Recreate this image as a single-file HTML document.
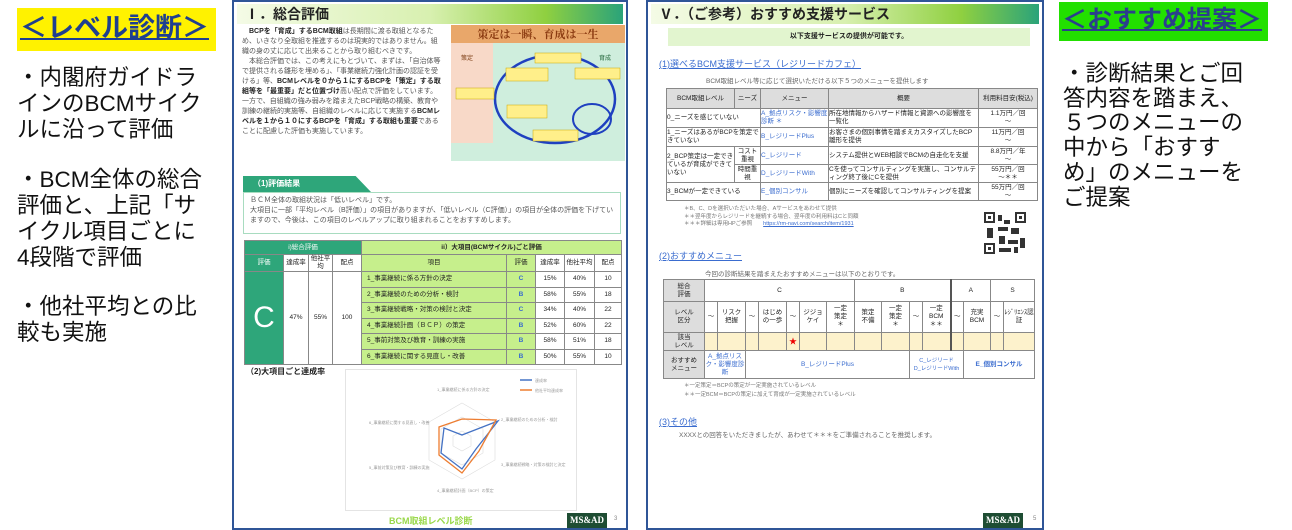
<!DOCTYPE html>
<html><head><meta charset="utf-8">
<style>
*{margin:0;padding:0;box-sizing:border-box}
body{width:1292px;height:530px;background:#fff;position:relative;overflow:hidden;font-family:"Liberation Sans","Noto Sans CJK JP",sans-serif;color:#222}
.a{position:absolute}
.lbl{font-weight:bold;color:#1f3f8f;text-decoration:underline;text-decoration-thickness:2px;white-space:nowrap}
.big{font-size:22.5px;line-height:26px;color:#111;white-space:nowrap}
.doc{position:absolute;border:2px solid #2f5597;background:#fff;top:0;height:530px}
.hdr{position:absolute;left:3px;right:3px;top:2px;height:20px;background:linear-gradient(90deg,#f4fbe6 0%,#d8f0b0 50%,#8fd040 80%,#2aa37a 100%);font-weight:bold;font-size:14px;padding-left:8px;line-height:20px}
.t7{font-size:7px;line-height:10px}
table{border-collapse:collapse;position:absolute}
td{border:1px solid #888;text-align:center;vertical-align:middle;font-size:6.5px;line-height:8px;padding:0}
.blue{color:#3a6ccf}
.logo{position:absolute;background:#1e4d33;color:#fff;font-family:"Liberation Serif",serif;font-weight:bold;font-size:9px;line-height:14px;text-align:center;width:40px;height:15px}
</style></head><body>

<!-- left -->
<div class="a" style="left:17px;top:8px;width:199px;height:43px;background:#fff200"></div>
<div class="a lbl" style="left:20px;top:11px;font-size:27px;line-height:34px">＜レベル診断＞</div>
<div class="a big" style="left:17px;top:65px">・内閣府ガイドラ<br>インのBCMサイク<br>ルに沿って評価</div>
<div class="a big" style="left:17px;top:167px">・BCM全体の総合<br>評価と、上記「サ<br>イクル項目ごとに<br>4段階で評価</div>
<div class="a big" style="left:17px;top:294px">・他社平均との比<br>較も実施</div>

<!-- right -->
<div class="a" style="left:1059px;top:2px;width:209px;height:39px;background:#22e000"></div>
<div class="a lbl" style="left:1062px;top:4px;font-size:25px;line-height:32px;color:#2b3f8c">＜おすすめ提案＞</div>
<div class="a big" style="left:1063px;top:62px;line-height:24.7px">・診断結果とご回<br>答内容を踏まえ、<br>５つのメニューの<br>中から「おすす<br>め」のメニューを<br>ご提案</div>

<!-- doc 1 -->
<div class="doc" style="left:232px;width:396px">
 <div class="hdr">Ⅰ．総合評価</div>
 <div class="a t7" style="left:8px;top:25px;width:202px;color:#555"><b style="color:#222">　BCPを「育成」するBCM取組</b>は長期間に渡る取組となるため、いきなり全取組を推進するのは現実的ではありません。組織の身の丈に応じて出来ることから取り組むべきです。<br>　本総合評価では、この考えにもとづいて、まずは、「自治体等で提供される雛形を埋める」、「事業継続力強化計画の認証を受ける」等、<b style="color:#222">BCMレベルを０から１にするBCPを「策定」する取組等を「最重要」だと位置づけ</b>高い配点で評価をしています。一方で、自組織の強み弱みを踏まえたBCP戦略の構築、教育や訓練の継続的実施等、自組織のレベルに応じて実施する<b style="color:#222">BCMレベルを１から１０にするBCPを「育成」する取組も重要</b>であることに配慮した評価も実施しています。</div>
 <div class="a" style="left:217px;top:23px;width:174px;height:136px;background:#cfeedd">
  <div class="a" style="left:0;top:0;width:174px;height:18px;background:#e9a76a;color:#8a3a10;font-weight:bold;font-size:11px;line-height:18px;text-align:center;font-family:'Noto Serif CJK SC',serif">策定は一瞬、育成は一生</div>
  <div class="a" style="left:0;top:18px;width:42px;height:100px;background:#f8d9c8"></div>
  <div class="a" style="left:10px;top:28px;font-size:6px;color:#7a3a10">策定</div>
  <div class="a" style="left:148px;top:28px;font-size:6px;color:#22663a">育成</div>
  <svg class="a" style="left:0;top:18px" width="174" height="118"><ellipse cx="104" cy="56" rx="60" ry="44" fill="none" stroke="#1f40c0" stroke-width="2.5"/><ellipse cx="141" cy="76" rx="19" ry="15" fill="none" stroke="#1f40c0" stroke-width="2"/>
  <g fill="#ffef8a" stroke="#c9a800" stroke-width=".5"><rect x="84" y="10" width="46" height="10"/><rect x="124" y="25" width="45" height="11"/><rect x="55" y="25" width="42" height="13"/><rect x="5" y="45" width="38" height="11"/><rect x="56" y="62" width="40" height="13"/><rect x="82" y="87" width="45" height="11"/></g></svg>
 </div>
 <div class="a" style="left:9px;top:174px;width:128px;height:16px;background:#2ea67a;clip-path:polygon(0 0,88% 0,100% 100%,0 100%);color:#fff;font-weight:bold;font-size:8px;line-height:16px;padding-left:10px">（1)評価結果</div>
 <div class="a t7" style="left:9px;top:190px;width:378px;height:42px;border:1px solid #a8dcc0;padding:3px 6px;color:#555;font-size:7px">ＢＣＭ全体の取組状況は「低いレベル」です。<br>大項目に一部「平均レベル（B評価）」の項目がありますが、「低いレベル（C評価）」の項目が全体の評価を下げていますので、今後は、この項目のレベルアップに取り組まれることをおすすめします。</div>
 <table style="left:10px;top:238px;width:378px">
  <tr style="height:14px"><td colspan="4" style="background:#2ea67a;color:#fff">i)総合評価</td><td colspan="5" style="background:#c6ef8c;font-weight:bold">ii）大項目(BCMサイクル)ごと評価</td></tr>
  <tr style="height:13px"><td style="background:#2ea67a;color:#fff;width:39px">評価</td><td style="width:25px">達成率</td><td style="width:24px">他社平均</td><td style="width:29px">配点</td><td style="background:#c6ef8c;width:145px">項目</td><td style="background:#c6ef8c;width:29px">評価</td><td style="width:29px">達成率</td><td style="width:30px">他社平均</td><td>配点</td></tr>
  <tr style="height:15.5px"><td rowspan="6" style="background:#2ea67a;color:#fff;font-size:30px;line-height:30px">C</td><td rowspan="6">47%</td><td rowspan="6">55%</td><td rowspan="6">100</td><td style="background:#c6ef8c;text-align:left;padding-left:5px">1_事業継続に係る方針の決定</td><td style="background:#c6ef8c" class="blue"><b>C</b></td><td>15%</td><td>40%</td><td>10</td></tr>
  <tr style="height:15.5px"><td style="background:#c6ef8c;text-align:left;padding-left:5px">2_事業継続のための分析・検討</td><td style="background:#c6ef8c" class="blue"><b>B</b></td><td>58%</td><td>55%</td><td>18</td></tr>
  <tr style="height:15.5px"><td style="background:#c6ef8c;text-align:left;padding-left:5px">3_事業継続戦略・対策の検討と決定</td><td style="background:#c6ef8c" class="blue"><b>C</b></td><td>34%</td><td>40%</td><td>22</td></tr>
  <tr style="height:15.5px"><td style="background:#c6ef8c;text-align:left;padding-left:5px">4_事業継続計画（ＢＣＰ）の策定</td><td style="background:#c6ef8c" class="blue"><b>B</b></td><td>52%</td><td>60%</td><td>22</td></tr>
  <tr style="height:15.5px"><td style="background:#c6ef8c;text-align:left;padding-left:5px">5_事前対策及び教育・訓練の実施</td><td style="background:#c6ef8c" class="blue"><b>B</b></td><td>58%</td><td>51%</td><td>18</td></tr>
  <tr style="height:15.5px"><td style="background:#c6ef8c;text-align:left;padding-left:5px">6_事業継続に関する見直し・改善</td><td style="background:#c6ef8c" class="blue"><b>B</b></td><td>50%</td><td>55%</td><td>10</td></tr>
 </table>
 <div class="a" style="left:12px;top:364px;font-size:8px;font-weight:bold">（2)大項目ごと達成率</div>
 <div class="a" style="left:111px;top:367px;width:232px;height:142px;border:1px solid #e4e4e4"></div>
 <svg class="a" style="left:111px;top:367px" width="232" height="142">
  <g fill="none" stroke="#ddd" stroke-width=".6"><polygon points="117,34 150,53 150,91 117,110 84,91 84,53"/><polygon points="117,48 138,60 138,84 117,96 96,84 96,60"/><polygon points="117,62 126,67 126,77 117,82 108,77 108,67"/></g>
  <polygon points="117,66 153,52 131,80 117,100 96,84 99,59" fill="none" stroke="#4472c4" stroke-width="1.3"/>
  <polygon points="117,50 151,51 134,82 117,104 94,86 94,58" fill="none" stroke="#ed7d31" stroke-width="1.3"/>
  <line x1="175" y1="11" x2="187" y2="11" stroke="#4472c4" stroke-width="1.5"/><line x1="175" y1="21" x2="187" y2="21" stroke="#ed7d31" stroke-width="1.5"/>
  <g font-size="4" fill="#999"><text x="190" y="13">達成率</text><text x="190" y="23">他社平均達成率</text><text x="92" y="22">1_事業継続に係る方針の決定</text><text x="156" y="52">2_事業継続のための分析・検討</text><text x="156" y="97">3_事業継続戦略・対策の検討と決定</text><text x="92" y="123">4_事業継続計画（BCP）の策定</text><text x="24" y="100">5_事前対策及び教育・訓練の実施</text><text x="24" y="55">6_事業継続に関する見直し・改善</text></g>
 </svg>
 <div class="a" style="left:155px;top:512px;font-size:9px;color:#9ad84a;font-weight:bold">BCM取組レベル診断</div>
 <div class="logo" style="left:333px;top:511px">MS&amp;AD</div>
 <div class="a" style="left:380px;top:514px;font-size:6px;color:#888">3</div>
</div>

<!-- doc 2 -->
<div class="doc" style="left:646px;width:398px">
 <div class="hdr">Ⅴ．（ご参考）おすすめ支援サービス</div>
 <div class="a" style="left:20px;top:26px;width:362px;height:18px;background:#e2f5cf;font-size:7px;font-weight:bold;text-align:center;line-height:18px">以下支援サービスの提供が可能です。</div>
 <div class="a" style="left:11px;top:55px;font-size:9px;color:#3a6ccf;text-decoration:underline">(1)選べるBCM支援サービス（レジリードカフェ）</div>
 <div class="a" style="left:58px;top:73px;font-size:6.5px;color:#666">BCM取組レベル等に応じて選択いただける以下５つのメニューを提供します</div>
 <table style="left:18px;top:86px;width:372px;border:1.5px solid #777">
  <tr style="height:20px;background:#ddd"><td style="width:68px">BCM取組レベル</td><td style="width:26px">ニーズ</td><td style="width:68px">メニュー</td><td style="width:150px">概要</td><td>利用料目安(税込)</td></tr>
  <tr style="height:19px"><td colspan="2" style="text-align:left">0_ニーズを感じていない</td><td class="blue" style="text-align:left">A_拠点リスク・影響度診断 ＊</td><td style="text-align:left">所在地情報からハザード情報と資源への影響度を一覧化</td><td>1.1万円／回<br>～</td></tr>
  <tr style="height:19px"><td colspan="2" style="text-align:left">1_ニーズはあるがBCPを策定できていない</td><td class="blue" style="text-align:left">B_レジリードPlus</td><td style="text-align:left">お客さまの個別事情を踏まえカスタイズしたBCP雛形を提供</td><td>11万円／回<br>～</td></tr>
  <tr style="height:18px"><td rowspan="2" style="text-align:left">2_BCP策定は一定できているが育成ができていない</td><td>コスト重視</td><td class="blue" style="text-align:left">C_レジリード</td><td style="text-align:left">システム提供とWEB相談でBCMの自走化を支援</td><td>8.8万円／年<br>～</td></tr>
  <tr style="height:18px"><td>時間重視</td><td class="blue" style="text-align:left">D_レジリードWith</td><td style="text-align:left">Cを使ってコンサルティングを実施し、コンサルティング終了後にCを提供</td><td>55万円／回<br>～＊＊</td></tr>
  <tr style="height:18px"><td colspan="2" style="text-align:left">3_BCMが一定できている</td><td class="blue" style="text-align:left">E_個別コンサル</td><td style="text-align:left">個別にニーズを確認してコンサルティングを提案</td><td>55万円／回<br>～</td></tr>
 </table>
 <div class="a" style="left:36px;top:204px;font-size:5.5px;line-height:7.5px;color:#777">＊B、C、Dを選択いただいた場合、Aサービスをあわせて提供<br>＊＊翌年度からレジリードを継続する場合、翌年度の利用料はCと同額<br>＊＊＊詳細は専用HPご参照　　<span style="color:#3a6ccf;text-decoration:underline">https://rm-navi.com/search/item/1931</span></div>
 <svg class="a" style="left:336px;top:210px" width="42" height="42"><rect width="42" height="42" fill="#fff"/><g fill="#333"><rect x="0" y="0" width="11" height="11"/><rect x="31" y="0" width="11" height="11"/><rect x="0" y="31" width="11" height="11"/><rect x="14" y="3" width="4" height="6"/><rect x="20" y="8" width="6" height="4"/><rect x="14" y="15" width="10" height="4"/><rect x="3" y="16" width="6" height="10"/><rect x="27" y="16" width="8" height="6"/><rect x="15" y="24" width="6" height="8"/><rect x="24" y="28" width="10" height="4"/><rect x="36" y="26" width="5" height="10"/><rect x="15" y="36" width="12" height="4"/><rect x="30" y="35" width="4" height="6"/></g><g fill="#fff"><rect x="2" y="2" width="7" height="7"/><rect x="33" y="2" width="7" height="7"/><rect x="2" y="33" width="7" height="7"/></g><g fill="#333"><rect x="4" y="4" width="3" height="3"/><rect x="35" y="4" width="3" height="3"/><rect x="4" y="35" width="3" height="3"/></g></svg>
 <div class="a" style="left:11px;top:247px;font-size:9px;color:#3a6ccf;text-decoration:underline">(2)おすすめメニュー</div>
 <div class="a" style="left:57px;top:266px;font-size:6.5px;color:#666">今回の診断結果を踏まえたおすすめメニューは以下のとおりです。</div>
 <table style="left:15px;top:277px;width:372px;border:1.5px solid #777">
  <tr style="height:22px"><td style="background:#ddd;width:41px">総合<br>評価</td><td colspan="7">C</td><td colspan="4">B</td><td colspan="2" style="border-left:2px solid #555">A</td><td colspan="2">S</td></tr>
  <tr style="height:31px"><td style="background:#ddd">レベル<br>区分</td><td style="width:13px">～</td><td style="width:28px">リスク<br>把握</td><td style="width:13px">～</td><td style="width:28px">はじめ<br>の一歩</td><td style="width:13px">～</td><td style="width:27px">ジジョ<br>ケイ</td><td style="width:28px">一定<br>策定<br>＊</td><td style="width:27px">策定<br>不備</td><td style="width:28px">一定<br>策定<br>＊</td><td style="width:13px">～</td><td style="width:28px">一定<br>BCM<br>＊＊</td><td style="width:13px;border-left:2px solid #555">～</td><td style="width:27px">充実<br>BCM</td><td style="width:13px">～</td><td>ﾚｼﾞﾘｴﾝｽ認証</td></tr>
  <tr style="height:18px;background:#fdf2cc"><td style="background:#ddd">該当<br>レベル</td><td></td><td></td><td></td><td></td><td style="color:#e00;font-size:8px">★</td><td></td><td></td><td></td><td></td><td></td><td></td><td style="border-left:2px solid #555"></td><td></td><td></td><td></td></tr>
  <tr style="height:28px"><td style="background:#ddd">おすすめ<br>メニュー</td><td colspan="2" class="blue">A_拠点リスク・影響度診断</td><td colspan="7" class="blue">B_レジリードPlus</td><td colspan="3" class="blue" style="font-size:5.5px">C_レジリード<br>D_レジリードWith</td><td colspan="3" class="blue"><b>E_個別コンサル</b></td></tr>
 </table>
 <div class="a" style="left:36px;top:380px;font-size:5.5px;line-height:9px;color:#777">＊一定策定＝BCPの策定が一定実施されているレベル<br>＊＊一定BCM＝BCPの策定に加えて育成が一定実施されているレベル</div>
 <div class="a" style="left:11px;top:413px;font-size:9px;color:#3a6ccf;text-decoration:underline">(3)その他</div>
 <div class="a" style="left:31px;top:427px;font-size:6.5px;color:#666">XXXXとの回答をいただきましたが、あわせて＊＊＊をご準備されることを推奨します。</div>
 <div class="logo" style="left:335px;top:511px">MS&amp;AD</div>
 <div class="a" style="left:385px;top:514px;font-size:6px;color:#888">5</div>
</div>
</body></html>
